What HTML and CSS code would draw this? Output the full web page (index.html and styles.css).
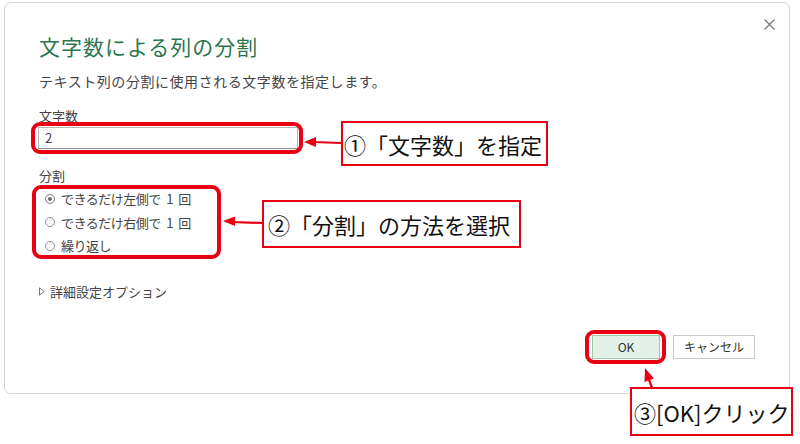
FILE: index.html
```html
<!DOCTYPE html>
<html lang="ja">
<head>
    <meta charset="UTF-8">
    <title>文字数による列の分割</title>
    <link rel="stylesheet" href="styles.css">
</head>
<body>
<main class="page">
    <section class="dialog">
        <div class="topbar">
            <span class="close">
                <svg width="11" height="11" viewBox="0 0 11 11"><path d="M0.5 0.5L10.5 10.5M10.5 0.5L0.5 10.5" stroke="#777" stroke-width="1.2" fill="none"/></svg>
            </span>
        </div>
        <h1 class="title">文字数による列の分割</h1>
        <p class="desc">テキスト列の分割に使用される文字数を指定します。</p>

        <label class="label">文字数</label>
        <div class="input">2</div>

        <label class="label label-split">分割</label>
        <div class="radios">
            <div class="radio-row"><span class="radio checked"></span>できるだけ左側で 1 回</div>
            <div class="radio-row"><span class="radio"></span>できるだけ右側で 1 回</div>
            <div class="radio-row"><span class="radio"></span>繰り返し</div>
        </div>

        <div class="advanced">
            <svg width="6" height="9" viewBox="0 0 6 9"><path d="M0.5 0.8L5.2 4.5L0.5 8.2Z" stroke="#777" stroke-width="1" fill="none"/></svg>
            詳細設定オプション
        </div>

        <div class="buttons">
            <span class="btn btn-ok">OK</span>
            <span class="btn">キャンセル</span>
        </div>
    </section>

    <!-- 説明用の注釈 -->
    <div class="mark mark-count"></div>
    <div class="mark mark-split"></div>
    <div class="mark mark-ok"></div>

    <div class="note note-1">①「文字数」を指定</div>
    <div class="note note-2">②「分割」の方法を選択</div>
    <div class="note note-3">③[OK]クリック</div>

    <svg class="arrows" width="800" height="444" viewBox="0 0 800 444">
        <line x1="342" y1="143" x2="312" y2="142" stroke="#e60012" stroke-width="2.2"/>
        <polygon points="304,142 316,137 316,147" fill="#e60012"/>
        <line x1="263" y1="223" x2="231" y2="222" stroke="#e60012" stroke-width="2.2"/>
        <polygon points="223,221 235,216.5 235,226" fill="#e60012"/>
        <line x1="652" y1="388" x2="648" y2="377" stroke="#e60012" stroke-width="2.2"/>
        <polygon points="645,368 654,378.5 644.5,382" fill="#e60012"/>
    </svg>
</main>
</body>
</html>
```

FILE: styles.css
```css
html, body{
    margin: 0;
    height: 100%;
    background: #fff;
}

body{
    font: 13px "Noto Sans CJK JP", "Noto Sans", sans-serif;
    color: #333;
}

.page{
    position: relative;
    width: 800px;
    height: 444px;
    overflow: hidden;
}

.dialog{
    display: flex;
    flex-direction: column;
    box-sizing: border-box;
    width: 786px;
    height: 392px;
    margin: 2px 0 0 4px;
    padding: 0 34px 34px 34px;
    border: 1px solid #d3d3d3;
    border-radius: 7px;
    background: #fff;
}

.topbar{
    display: flex;
    justify-content: flex-end;
    height: 28px;
    margin-right: -20px;
}
.close{
    display: block;
    margin-top: 12px;
    height: 11px;
}

.title{
    margin: 0;
    font-size: 21px;
    font-weight: normal;
    line-height: 30px;
    letter-spacing: 1px;
    color: #2d7650;
}

.desc{
    margin: 10px 0 0;
    font-size: 14px;
    line-height: 20px;
    letter-spacing: 0.55px;
    color: #444;
}

.label{
    display: block;
    margin-top: 17px;
    line-height: 16px;
    color: #444;
}
.label-split{
    margin-top: 19px;
}

.input{
    box-sizing: border-box;
    width: 260px;
    height: 22px;
    margin: 3px 0 0 -1px;
    padding-left: 6px;
    border: 1px solid #b4b4b4;
    border-bottom-color: #8c8c8c;
    line-height: 20px;
    color: #444;
}

.radios{
    margin-top: 3px;
}
.radio-row{
    display: flex;
    align-items: center;
    height: 23.5px;
    padding-left: 6px;
    letter-spacing: -0.5px;
    word-spacing: 3px;
    color: #444;
}
.radio{
    box-sizing: border-box;
    width: 10px;
    height: 10px;
    margin-right: 6px;
    border: 1px solid #8d8d8d;
    border-radius: 50%;
}
.radio.checked{
    background: #6a6a6a;
    box-shadow: inset 0 0 0 2px #fff;
}

.advanced{
    display: flex;
    align-items: center;
    gap: 5px;
    margin-top: 25px;
    line-height: 18px;
    color: #444;
}

.buttons{
    display: flex;
    justify-content: flex-end;
    gap: 13px;
    margin-top: auto;
}
.btn{
    box-sizing: border-box;
    width: 82px;
    height: 24px;
    border: 1px solid #c9c9c9;
    font-size: 12px;
    line-height: 22px;
    text-align: center;
    color: #333;
    background: #fff;
}
.btn-ok{
    width: 68px;
    background: #e4f1e8;
    border-color: #9cc8ab;
}

/* 注釈 */
.mark{
    position: absolute;
    box-sizing: border-box;
    border: 4px solid #e60012;
    border-radius: 9px;
}
.mark-count{
    left: 31px;
    top: 122px;
    width: 272px;
    height: 32px;
}
.mark-split{
    left: 32px;
    top: 185px;
    width: 189px;
    height: 74px;
}
.mark-ok{
    left: 585px;
    top: 330px;
    width: 81px;
    height: 34px;
}

.note{
    position: absolute;
    display: flex;
    align-items: center;
    box-sizing: border-box;
    border: 2px solid #e60012;
    background: #fff;
    color: #111;
    font-size: 22px;
    white-space: nowrap;
}
.note-1{
    left: 341px;
    top: 121px;
    width: 207px;
    height: 45px;
    padding-left: 1px;
}
.note-2{
    left: 262px;
    top: 200px;
    width: 259px;
    height: 48px;
    padding-left: 4px;
}
.note-3{
    left: 630px;
    top: 387px;
    width: 163px;
    height: 49px;
    padding-left: 2px;
}

.arrows{
    position: absolute;
    left: 0;
    top: 0;
    pointer-events: none;
}
```
